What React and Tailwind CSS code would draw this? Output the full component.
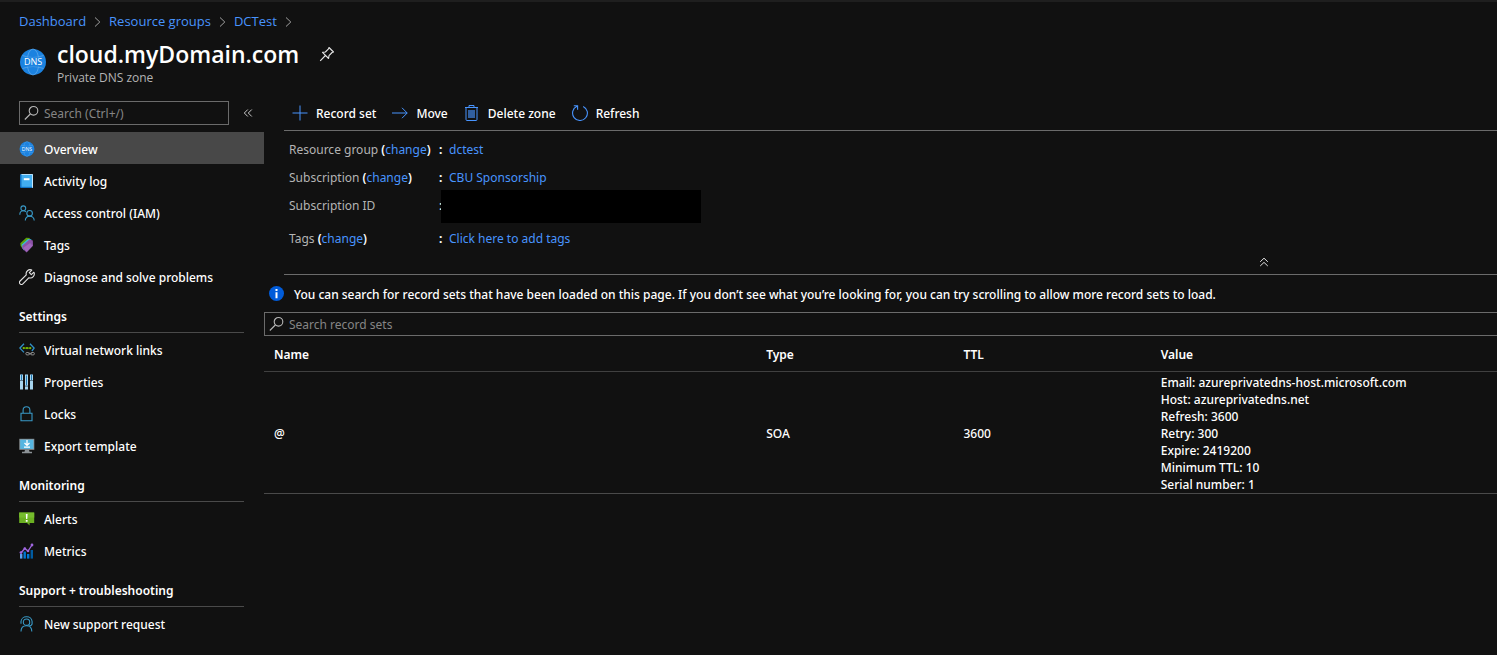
import React from "react";

const GLOBE = (
  <>
    <circle cx="14" cy="14" r="13" fill="#1b82e0" />
    <g fill="none" stroke="#5aa6ea" strokeWidth="0.8">
      <ellipse cx="14" cy="14" rx="6" ry="13" />
      <path d="M3.5 7.5Q14 11.5 24.5 7.5M3.5 20.5Q14 16.5 24.5 20.5" />
    </g>
    <rect x="2" y="9.5" width="24" height="9" fill="#1b82e0" />
    <text x="14" y="17.3" textAnchor="middle" fontSize="9" fontFamily="Open Sans, sans-serif" fill="#fff">DNS</text>
  </>
);

const icons = {
  dns: <svg viewBox="0 0 28 28" className="size-4">{GLOBE}</svg>,
  log: (
    <svg viewBox="0 0 16 16" className="size-4">
      <path d="M1 2.2Q1 1 2.2 1H14v14H2.2Q1 15 1 13.8z" fill="#1173c5" />
      <path d="M2.5 1.2H13.2V13.8H2.5z" fill="#42aef0" />
      <path d="M2.5 1.2H13.2V2H2.5z" fill="#d5eefc" />
      <path d="M13 1.2H14V14.8H13z" fill="#c4e3f7" />
      <path d="M4.8 5.2H10.5V7.2H4.8z" fill="#fff" />
    </svg>
  ),
  iam: (
    <svg viewBox="0 0 16 16" className="size-4" fill="none" stroke="#3999c6" strokeWidth="1.1">
      <circle cx="4.3" cy="3.3" r="2.4" />
      <path d="M.8 9.8C.8 7.2 2.3 5.8 4.3 5.8q1.6 0 2.6 1" />
      <circle cx="10.6" cy="8.3" r="2.8" />
      <path d="M6.3 15.5c0-2.7 1.8-4.4 4.3-4.4s4.6 1.7 4.6 4.4" />
    </svg>
  ),
  tags: (
    <svg viewBox="0 0 16 16" className="size-4">
      <path d="M1.3 6.2 7.2.8l4 .2L3.2 11.2 1.6 9z" fill="#5ea00b" />
      <path d="M2.5 7.8 9 2l3.6.2L5 13.4 3.2 11z" fill="#32bedd" />
      <path d="M3.2 8.8 10.4 2.6l3.4.9.2 5.2L7.6 15.6 3.4 11.5z" fill="#8c52a8" />
      <path d="m4 10.9 3.8 3.8 5.8-6-2.5-2.8z" fill="#a067bb" />
    </svg>
  ),
  wrench: (
    <svg viewBox="0 0 16 16" className="size-4" fill="none" stroke="#e4e4e4" strokeWidth="1.1" strokeLinejoin="round">
      <path d="M12.8 1.1a4 4 0 0 0-5.5 4.8L1.1 12a1.9 1.9 0 0 0 2.8 2.8l6.1-6.1a4 4 0 0 0 4.9-5.5l-2.6 2.5-2-2z" />
    </svg>
  ),
  vnet: (
    <svg viewBox="0 0 16 16" className="size-4" fill="none">
      <path d="M5 1.8.9 6.1 5 10.4M11 1.8l4.1 4.3L12.9 9" stroke="#3091c9" strokeWidth="1.3" />
      <path d="M4.6 6.1h6.8" stroke="#6cb513" />
      <g fill="#7fba00"><circle cx="4.7" cy="6.1" r="1.1" /><circle cx="8" cy="6.1" r="1.1" /><circle cx="11.3" cy="6.1" r="1.1" /></g>
      <g stroke="#8a8a8a"><rect x="6.8" y="10.5" width="3.8" height="2.4" rx="1.2" /><rect x="11.6" y="10.5" width="3.8" height="2.4" rx="1.2" /><path d="M9.3 11.7h3.6" /></g>
    </svg>
  ),
  props: (
    <svg viewBox="0 0 16 16" className="size-4">
      <path d="M1 .5h3v15H1zM6 .5h3v15H6zM11 .5h3v15h-3z" fill="#a7d5ee" />
      <path d="M2 .5h1V6H2zM7 1.5h1v9.800H7zM12 .5h1V6h-1z" fill="#2078b4" />
      <path d="M1 6h3v1H1zM6 11.500h3v1.200H6zM11 6h3v1h-3z" fill="#59798d" />
    </svg>
  ),
  lock: (
    <svg viewBox="0 0 16 16" className="size-4" fill="none" stroke="#3999c6" strokeWidth="1.1">
      <path d="M2 7.3h11v7.4H2zM4.100 7.300V4.200a3.400 3.400 0 0 1 6.800 0v3.100" />
    </svg>
  ),
  exportT: (
    <svg viewBox="0 0 16 16" className="size-4">
      <path d="M.3.8h15v11H.3z" fill="#8c9296" />
      <path d="M1.2 1.7h13.200v9.200H1.200z" fill="#55b5e0" />
      <path d="M6 11.800h4l.5 2H13v1.400H3v-1.400h2.500z" fill="#8c9296" />
      <path d="M8 2v5M5.500 5 8 7.400 10.500 5M5 9.200h6" stroke="#fff" strokeWidth="1.3" fill="none" />
    </svg>
  ),
  alerts: (
    <svg viewBox="0 0 16 16" className="size-4">
      <path d="M.2 1.600h15v10.500h-4.600v2.500l-2.600-2.500H.2z" fill="#6bb022" />
      <path d="M.2 1.600h15v5H.2z" fill="#76bc2d" />
      <path d="M6.800 3h1.800l-.3 5H7.100zM6.800 9h1.800v1.800H6.800z" fill="#fff" />
    </svg>
  ),
  metrics: (
    <svg viewBox="0 0 16 16" className="size-4">
      <path d="M1 11h2.400v4.600H1z" fill="#5ea0ef" />
      <path d="M4.500 8.600h2.400v7H4.500z" fill="#0078d4" />
      <path d="M8 11h2.400v4.600H8z" fill="#0078d4" />
      <path d="M11.600 7H14v8.600h-2.400z" fill="#005ba1" />
      <path d="m2 9.700 3.800-4.200L9 8l4-6" fill="none" stroke="#a067e0" strokeWidth="1.3" />
      <g fill="#a067e0"><circle cx="2" cy="9.6" r="1.4" /><circle cx="5.8" cy="5.5" r="1.3" /><circle cx="9" cy="8" r="1.3" /><circle cx="13" cy="2" r="1.4" /></g>
    </svg>
  ),
  support: (
    <svg viewBox="0 0 16 16" className="size-4" fill="none" stroke="#3999c6" strokeWidth="1.1">
      <circle cx="7.5" cy="6.2" r="3.2" />
      <path d="M2 7.800V5.500A5.300 5.300 0 0 1 7.500.8a5.300 5.300 0 0 1 5.600 4.700v2.300q0 2-3.600 2.200M2 15.600c0-3.400 2-5.900 5.400-5.900s5.400 2.500 5.400 5.900" />
    </svg>
  ),
};

const overview = [
  ["Overview", "dns"],
  ["Activity log", "log"],
  ["Access control (IAM)", "iam"],
  ["Tags", "tags"],
  ["Diagnose and solve problems", "wrench"],
];

const groups = [
  ["Settings", [["Virtual network links", "vnet"], ["Properties", "props"], ["Locks", "lock"], ["Export template", "exportT"]]],
  ["Monitoring", [["Alerts", "alerts"], ["Metrics", "metrics"]]],
  ["Support + troubleshooting", [["New support request", "support"]]],
];

const soa = [
  "Email: azureprivatedns-host.microsoft.com",
  "Host: azureprivatedns.net",
  "Refresh: 3600",
  "Retry: 300",
  "Expire: 2419200",
  "Minimum TTL: 10",
  "Serial number: 1",
];

function NavList({ items, active }) {
  return (
    <ul className="pb-px">
      {items.map(([label, icon]) => (
        <li key={label}>
          <a
            href="#"
            className={
              "flex h-8 items-center gap-[9px] pt-0.5 pl-[19px] " + (label === active ? "bg-[#484848]" : "")
            }
          >
            {icons[icon]}
            <span>{label}</span>
          </a>
        </li>
      ))}
    </ul>
  );
}

function Magnifier() {
  return (
    <svg viewBox="0 0 16 16" className="size-4 shrink-0" fill="none" stroke="#b8b8b8" strokeWidth="1.1">
      <circle cx="9.5" cy="5.8" r="4.3" />
      <path d="M6.3 9 .8 14.5" />
    </svg>
  );
}

function Crumb({ children }) {
  return (
    <li className="flex items-center gap-2">
      <a href="#" className="text-[#4894fe]">{children}</a>
      <svg viewBox="0 0 7 10" className="h-2.5 w-[7px]" fill="none" stroke="#a0a0a0">
        <path d="m1 .5 4.8 4.5L1 9.5" />
      </svg>
    </li>
  );
}

function Command({ icon, children }) {
  return (
    <button type="button" className="flex items-center gap-2">
      {icon}
      <span className="pt-px">{children}</span>
    </button>
  );
}

function Fact({ label, change, children }) {
  return (
    <div className="flex h-7 items-center font-normal">
      <dt className="w-[150px] whitespace-nowrap text-[#b4b4b4]">
        {label}
        {change && (
          <>
            {" "}
            <span className="font-semibold text-white">(</span>
            <a href="#" className="text-[#4894fe]">change</a>
            <span className="font-semibold text-white">)</span>
          </>
        )}
      </dt>
      <span className="w-[10px] font-bold">:</span>
      <dd className="text-[#4894fe]">{children}</dd>
    </div>
  );
}

export default function App() {
  return (
    <div className="min-h-screen border-t-2 border-[#1f1f1f] bg-[#111111] font-['Noto_Sans',sans-serif] text-[12px] leading-[17px] font-medium text-white">
      <header className="px-[19px] pt-[11px] font-['Open_Sans',sans-serif] font-normal">
        <nav aria-label="Breadcrumb" className="text-[13px]">
          <ol className="flex gap-2">
            <Crumb>Dashboard</Crumb>
            <Crumb>Resource groups</Crumb>
            <Crumb>DCTest</Crumb>
          </ol>
        </nav>
        <div className="mt-2 flex items-center gap-2.5">
          <svg viewBox="0 0 28 28" className="size-7 shrink-0">{GLOBE}</svg>
          <div>
            <div className="flex items-center gap-5">
              <h1 className="text-[23px] leading-8 font-semibold">cloud.myDomain.com</h1>
              <button type="button" aria-label="Pin">
                <svg viewBox="0 0 16 16" className="size-4" fill="none" stroke="#e6e6e6" strokeWidth="1.1" strokeLinejoin="round">
                  <path d="m10 1.5 4.5 4.500-1.400.5L10 9.600l-.4 2.900L3.500 6.400l2.900-.4 3.100-3.100zM6.400 9.500 1.200 14.800" />
                </svg>
              </button>
            </div>
            <p className="text-[12px] leading-4 text-[#b4b4b4]">Private DNS zone</p>
          </div>
        </div>
      </header>

      <div className="mt-[15px] flex">
        <aside className="w-[264px] shrink-0">
          <div className="flex items-center gap-3.5 pl-[19px]">
            <label className="flex h-6 w-[210px] items-center gap-1 border border-[#6b6b6b] px-1">
              <Magnifier />
              <input
                type="search"
                aria-label="Search menu"
                placeholder="Search (Ctrl+/)"
                className="w-full min-w-0 bg-transparent font-normal outline-none placeholder:text-[#858585]"
              />
            </label>
            <button type="button" aria-label="Collapse menu">
              <svg viewBox="0 0 10 10" className="size-2.5" fill="none" stroke="#c8c8c8">
                <path d="M4.800 1.500 1.300 5l3.500 3.500M8.800 1.500 5.300 5l3.500 3.500" />
              </svg>
            </button>
          </div>
          <nav className="mt-[7px] pb-4">
            <NavList items={overview} active="Overview" />
            {groups.map(([title, items]) => (
              <section key={title}>
                <h2 className="mr-5 ml-[19px] h-10 border-b border-[#4a4a4a] pt-[15px] font-semibold">
                  {title}
                </h2>
                <NavList items={items} />
              </section>
            ))}
          </nav>
        </aside>

        <main className="min-w-0 flex-1">
          <div className="ml-5">
            <div className="flex h-[30px] gap-4 border-b border-[#6b6b6b] pb-[5px] pl-2">
              <Command icon={
                <svg viewBox="0 0 16 16" className="size-4" stroke="#4894fe" fill="none"><path d="M8 .5v15M.5 8h15" /></svg>
              }>Record set</Command>
              <Command icon={
                <svg viewBox="0 0 16 16" className="size-4" stroke="#4894fe" fill="none"><path d="M0 8h15.200M10 2.800 15.200 8 10 13.200" /></svg>
              }>Move</Command>
              <Command icon={
                <svg viewBox="0 0 16 16" className="size-4" stroke="#4894fe" fill="none">
                  <path d="M1 2.500h13M5 2.500v-2h5v2M2 2.500v12q0 1 1 1h9q1 0 1-1v-12" />
                  <path d="M4 5h7v8H4z" fill="#315f9f" stroke="none" />
                </svg>
              }>Delete zone</Command>
              <Command icon={
                <svg viewBox="0 0 16 16" className="size-4" stroke="#4894fe" strokeWidth="1.1" fill="none">
                  <path d="M5 1.300A7.400 7.400 0 1 0 11.200 1.400M1.800.8h3.800v4" />
                </svg>
              }>Refresh</Command>
            </div>
            <div className="border-b border-[#6b6b6b] pt-1 pb-[5px] pl-[5px]">
              <dl>
                <Fact label="Resource group" change><a href="#">dctest</a></Fact>
                <Fact label="Subscription" change><a href="#">CBU Sponsorship</a></Fact>
                <div className="flex h-[33px] items-start font-normal">
                  <dt className="w-[150px] pt-1.5 text-[#b4b4b4]">Subscription ID</dt>
                  <span className="w-0.5 overflow-hidden pt-1.5">:</span>
                  <dd className="-mt-px h-[33px] w-[260px] bg-black" />
                </div>
                <Fact label="Tags" change><a href="#">Click here to add tags</a></Fact>
              </dl>
              <div className="flex justify-end pr-[228px]">
                <button type="button" aria-label="Collapse essentials" className="mt-[3px] flex h-3.5 items-center">
                  <svg viewBox="0 0 10 10" className="size-2.5" fill="none" stroke="#e0e0e0">
                    <path d="M1.200 4.800 5 1.200l3.800 3.600M1.200 9 5 5.400 8.800 9" />
                  </svg>
                </button>
              </div>
            </div>
          </div>

          <div className="flex h-[37px] items-center gap-[9px] pl-[5px]">
            <svg viewBox="0 0 16 16" className="size-4 shrink-0">
              <circle cx="7.5" cy="7.5" r="7.5" fill="#015cda" />
              <path d="M6.500 6.200h2v6h-2zM6.500 3h2v2h-2z" fill="#fff" />
            </svg>
            <p className="pt-0.5">
              You can search for record sets that have been loaded on this page. If you don’t see what you’re
              looking for, you can try scrolling to allow more record sets to load.
            </p>
          </div>
          <label className="flex h-6 items-center gap-1 border border-r-0 border-[#6b6b6b] pl-1">
            <Magnifier />
            <input
              type="search"
              aria-label="Search record sets"
              placeholder="Search record sets"
              className="w-full bg-transparent font-normal outline-none placeholder:text-[#858585]"
            />
          </label>
          <table className="w-full table-fixed border-collapse text-left">
            <thead>
              <tr className="h-[35px] border-b border-[#404040]">
                <th className="w-[40%] pt-0.5 pl-2.5 font-semibold">Name</th>
                <th className="w-[16%] pt-0.5 pl-[9px] font-semibold">Type</th>
                <th className="w-[16%] pt-0.5 pl-[9px] font-semibold">TTL</th>
                <th className="pt-0.5 pl-[9px] font-semibold">Value</th>
              </tr>
            </thead>
            <tbody>
              <tr className="border-b border-[#4a4a4a]">
                <td className="pt-0.5 pl-2.5">@</td>
                <td className="pt-0.5 pl-[9px]">SOA</td>
                <td className="pt-0.5 pl-[9px]">3600</td>
                <td className="pt-0.5 pl-[9px]">
                  {soa.map((line) => (
                    <div key={line}>{line}</div>
                  ))}
                </td>
              </tr>
            </tbody>
          </table>
        </main>
      </div>
    </div>
  );
}
